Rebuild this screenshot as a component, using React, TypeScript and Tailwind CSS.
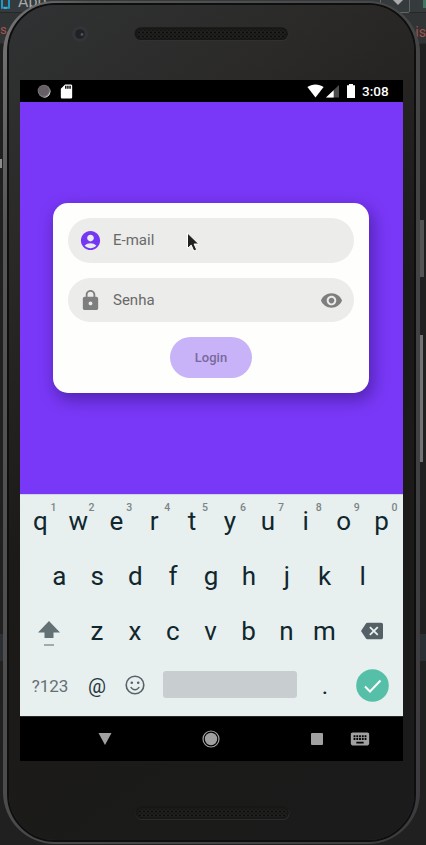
import { MdAccountCircle, MdBackspace, MdKeyboard, MdLock, MdSdCard, MdVisibility } from "react-icons/md";

const topRow = ["q", "w", "e", "r", "t", "y", "u", "i", "o", "p"];
const homeRow = ["a", "s", "d", "f", "g", "h", "j", "k", "l"];
const lastRow = ["z", "x", "c", "v", "b", "n", "m"];

function Speaker({ id }: { id: string }) {
  return (
    <svg width="155" height="14" viewBox="0 0 155 14">
      <defs>
        <pattern id={id} width="4" height="4" patternUnits="userSpaceOnUse">
          <rect width="4" height="4" fill="#20201f" />
          <circle cx="1" cy="1.5" r="0.9" fill="#080808" />
          <circle cx="3" cy="3.5" r="0.7" fill="#0c0c0c" />
        </pattern>
      </defs>
      <rect x="0.5" y="1" width="154" height="12.8" rx="6.4" fill="#333332" />
      <rect x="0.5" y="0.3" width="153.5" height="12.7" rx="6.3" fill="#171716" />
      <rect x="3" y="2.5" width="149" height="9" rx="4.5" fill={`url(#${id})`} />
    </svg>
  );
}

function Backdrop() {
  return (
    <div className="absolute inset-0 overflow-hidden bg-[#202020]">
      <div className="relative h-[13px] border-b border-[#252829] bg-[#353a3c]">
        <svg className="absolute left-0 top-0" width="12" height="10" viewBox="0 0 12 10">
          <path d="M2 -3v10.8h7V-3" fill="none" stroke="#1e98c6" strokeWidth="2" />
          <path d="M4 8h3" stroke="#59c5ea" />
        </svg>
        <span className="absolute -top-[7px] left-[18px] text-[16px] leading-[18px] text-[#a5a8a9]">App</span>
        <div className="absolute -top-1 left-[380px] h-[17px] w-[30px] rounded-[2px] border border-[#626566]" />
        <svg className="absolute left-[393px] top-0" width="10" height="6" viewBox="0 0 10 6">
          <path d="M0 0h10L5 5z" fill="#aaa" />
        </svg>
        <div className="absolute left-[423px] top-0 h-2 w-[3px] bg-[#40765d]" />
      </div>
      <div className="relative h-[31px] border-b border-[#282b2d] bg-[#303435]">
        <span className="absolute left-0 top-[7px] text-[13px] leading-[20px] text-[#a3534d]">s.</span>
        <span className="absolute right-0 top-[9px] text-[14px] leading-[20px] text-[#a3534d]">is</span>
      </div>
      <div className="absolute left-0 top-[159px] h-[9px] w-[2px] bg-[#8b8b8b]" />
      <div className="absolute left-0 top-[634px] h-[27px] w-[426px] bg-[#292f32]" />
      <div className="absolute left-[420px] top-[220px] h-[57px] w-[4px] bg-[#545454]" />
      <div className="absolute left-[420px] top-[335px] h-[127px] w-[3px] bg-[#737373]" />
    </div>
  );
}

function StatusBar() {
  return (
    <div className="flex h-[22px] items-center bg-black pl-[17px] pr-[15px]">
      <svg width="14" height="14" viewBox="0 0 14 14">
        <circle cx="7" cy="7" r="6.3" fill="#77747a" />
        <path d="M13 5a6.3 6.3 0 0 1-8 8.2A7 7 0 0 0 13 5z" fill="#f3f3f3" />
        <circle cx="6.6" cy="6.5" r="5.2" fill="#655f65" />
      </svg>
      <MdSdCard className="ml-[7px] h-[17px] w-[17px] text-white" />
      <div className="flex-1" />
      <svg width="17" height="14" viewBox="0 0 17 14">
        <path d="M0.4 3C5 -0.5 12 -0.5 16.6 3L8.5 13.5z" fill="#fff" />
      </svg>
      <svg className="ml-[2px]" width="13" height="14" viewBox="0 0 13 14">
        <path d="M0 13.5L13 1v12.5z" fill="#4c4c4c" />
        <path d="M0 13.5L7.7 6.2v7.3z" fill="#fff" />
      </svg>
      <svg className="ml-[8px]" width="8" height="14" viewBox="0 0 8 14">
        <path d="M2 0h4v1.3h2V14H0V1.3h2z" fill="#fff" />
      </svg>
      <span className="ml-[7px] w-[26px] whitespace-nowrap text-[13.5px] font-medium leading-[22px] text-white">3:08</span>
    </div>
  );
}

function LoginCard() {
  return (
    <div className="flex h-[190px] w-[316px] flex-col items-center rounded-[15px] bg-[#fefefd] pt-[15px] shadow-[3px_6px_16px_1px_rgba(35,10,90,0.45)]">
      <div className="flex h-[45px] w-[286px] items-center rounded-full bg-[#ececeb] pl-[11px]">
        <MdAccountCircle className="h-[23px] w-[23px] text-[#7438f3]" />
        <span className="ml-[11px] text-[15px] text-[#696969]">E-mail</span>
      </div>
      <div className="mt-[15px] flex h-[44px] w-[286px] items-center rounded-full bg-[#ececeb] pl-[11px] pr-[11px]">
        <MdLock className="h-[23px] w-[23px] text-[#7d7f7f]" />
        <span className="ml-[11px] flex-1 text-[15px] text-[#696969]">Senha</span>
        <MdVisibility className="h-[23px] w-[23px] text-[#7d7f7f]" />
      </div>
      <button className="mt-[15px] h-[41px] w-[82px] rounded-full bg-[#c8b2f8] text-[13px] font-medium text-[#79699b]">
        Login
      </button>
    </div>
  );
}

function Letter({ label, hint }: { label: string; hint?: string }) {
  return (
    <div className="relative flex h-[55px] w-[37.9px] items-center justify-center pb-[2px] text-[26px] leading-[30px] text-[#10272d]">
      {label}
      {hint && <span className="absolute left-[29px] top-[8px] text-[10.5px] font-medium leading-[12px] text-[#7b8587]">{hint}</span>}
    </div>
  );
}

function Keyboard() {
  return (
    <div className="h-[222px] overflow-hidden border-t border-[#cfd5dc] bg-[#e8efef]">
      <div className="-mt-px flex justify-center pr-px">
        {topRow.map((k, i) => <Letter key={k} label={k} hint={String((i + 1) % 10)} />)}
      </div>
      <div className="flex justify-center pr-px">
        {homeRow.map((k) => <Letter key={k} label={k} />)}
      </div>
      <div className="flex items-center">
        <div className="flex w-[58px] justify-center">
          <svg width="22" height="28" viewBox="0 0 22 28">
            <path d="M11 3L22 14.5h-6.5V20h-9v-5.500H0z" fill="#637074" />
            <path d="M6 27h10" stroke="#7b8789" strokeWidth="1.3" />
          </svg>
        </div>
        {lastRow.map((k) => <Letter key={k} label={k} />)}
        <MdBackspace className="mb-px ml-[18px] h-[22px] w-[22px] text-[#536166]" />
      </div>
      <div className="flex h-[53px] items-center">
        <span className="w-[58px] pl-[2px] text-center text-[17px] leading-[20px] text-[#657074]">?123</span>
        <span className="w-[38px] text-center text-[20px] leading-[24px] text-[#26383d]">@</span>
        <svg className="mb-[2px] ml-[9px]" width="20" height="20" viewBox="0 0 20 20">
          <circle cx="10" cy="10" r="8.8" fill="none" stroke="#566469" strokeWidth="1.6" />
          <circle cx="6.8" cy="7.8" r="1.3" fill="#566469" />
          <circle cx="13.2" cy="7.800" r="1.3" fill="#566469" />
          <path d="M5.8 12q1.4 2.700 4.200 2.700t4.200-2.700" fill="none" stroke="#566469" strokeWidth="1.5" />
        </svg>
        <div className="mb-[2px] ml-[18px] h-[27px] w-[134px] rounded-[3px] bg-[#c8cdcf]" />
        <span className="w-[56px] text-center text-[24px] leading-[28px] text-[#10272d]">.</span>
        <svg className="ml-[3px]" width="33" height="33" viewBox="0 0 33 33">
          <circle cx="16.500" cy="16.500" r="16.300" fill="#55bfa8" />
          <path d="M9 17.500l5 5L24.500 11.500" fill="none" stroke="#fff" strokeWidth="2" />
        </svg>
      </div>
    </div>
  );
}

function NavBar() {
  return (
    <div className="flex h-[45px] items-center border-t border-[#262626] bg-black pl-[78px]">
      <svg width="14" height="12" viewBox="0 0 14 12">
        <path d="M0.500 0h13L7 12z" fill="#a0a0a0" />
      </svg>
      <svg className="ml-[90px]" width="18" height="18" viewBox="0 0 18 18">
        <circle cx="9" cy="9" r="8" fill="none" stroke="#a0a0a0" strokeWidth="1.200" />
        <circle cx="9" cy="9" r="6.200" fill="#a0a0a0" />
      </svg>
      <div className="ml-[91px] h-[12px] w-[12px] rounded-[1px] bg-[#a0a0a0]" />
      <MdKeyboard className="ml-[26px] h-[22px] w-[22px] text-[#a0a0a0]" />
    </div>
  );
}

export default function App() {
  return (
    <div className="relative h-[845px] w-[426px] overflow-hidden font-[Roboto,sans-serif]">
      <Backdrop />
      <div className="relative ml-[3px] h-full w-[417px] pt-px">
        <div className="h-[843px] rounded-[52px] bg-[linear-gradient(110deg,#777_0%,#555_12%,#484848_50%,#3c3a3e_100%)] px-[4px] py-[2px]">
          <div className="h-full rounded-[48px] border-2 border-[#0e0e0e] bg-[#303030]">
            <div className="flex h-full flex-col items-start rounded-[46px] bg-[linear-gradient(145deg,#303233_0%,#2b2a29_20%,#1b1a18_50%,#1b1b1b_100%)] pl-[11px]">
              <div className="flex h-[75px] w-full pl-[52px] pt-[21px]">
                <svg width="16" height="16" viewBox="0 0 16 16">
                  <circle cx="8" cy="8" r="8" fill="#343336" />
                  <circle cx="8" cy="8" r="4.800" fill="#202027" />
                  <circle cx="10" cy="8.500" r="1.400" fill="#50505f" />
                </svg>
                <div className="ml-[46px] mt-px"><Speaker id="top-mesh" /></div>
              </div>
              <div className="w-[383px]">
                <StatusBar />
                <div className="h-[392px] bg-[#7938f7] pl-[33px] pt-[101px]"><LoginCard /></div>
                <Keyboard />
                <NavBar />
              </div>
              <div className="pl-[115px] pt-[45px]"><Speaker id="bottom-mesh" /></div>
            </div>
          </div>
        </div>
      </div>
      <svg className="absolute left-[186px] top-[232px]" width="14" height="21" viewBox="0 0 14 21">
        <path d="M1.500 1v15.500l3.700-3.400 2.600 5.900 2.900-1.300-2.600-5.700h4.700z" fill="#222" stroke="#fff" strokeWidth="1" />
      </svg>
    </div>
  );
}
